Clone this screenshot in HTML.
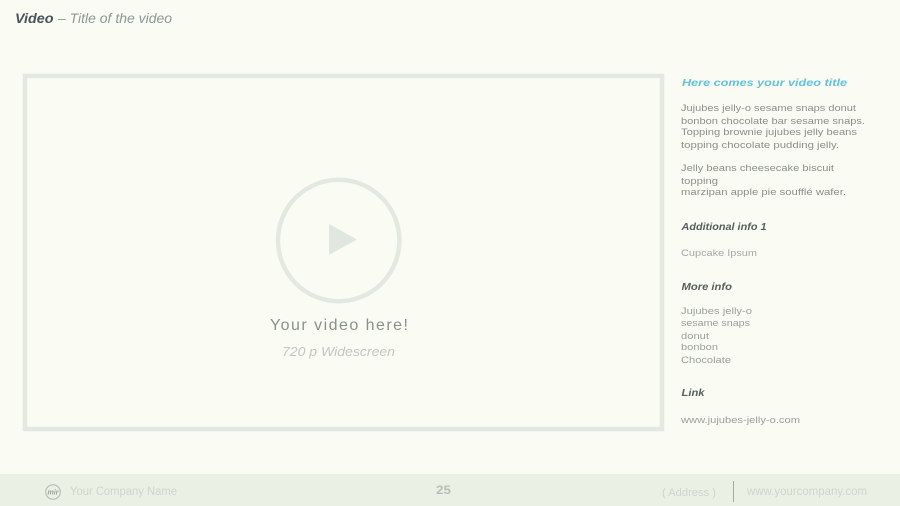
<!DOCTYPE html>
<html><head><meta charset="utf-8">
<style>
html,body{margin:0;padding:0;background:#fafbf3;width:900px;height:506px;overflow:hidden}
svg{display:block}
text{font-family:"Liberation Sans",sans-serif;white-space:pre}
.b{font-size:9.5px;fill:#8b908b}
.h{font-size:10.5px;font-weight:bold;font-style:italic;fill:#566060}
</style></head><body>
<svg width="900" height="506" viewBox="0 0 900 506" xmlns="http://www.w3.org/2000/svg">
<rect width="900" height="506" fill="#fafbf3"/>
<text x="15" y="23" font-size="14" font-weight="bold" font-style="italic" fill="#49545a" textLength="38.5" lengthAdjust="spacingAndGlyphs">Video</text>
<text x="58" y="23" font-size="14" font-style="italic" fill="#90979a" textLength="114" lengthAdjust="spacingAndGlyphs">– Title of the video</text>
<rect x="25" y="76" width="637" height="353" fill="#fafcf3" stroke="#e3e9e0" stroke-width="4.5"/>
<circle cx="338.7" cy="240.5" r="60.7" fill="none" stroke="#e3e9e0" stroke-width="4.5"/>
<path d="M329 224L357 239.5L329 255Z" fill="#e0e7df"/>
<text x="270" y="330" font-size="16" fill="#8a908d" textLength="138" lengthAdjust="spacing">Your video here!</text>
<text x="282" y="356" font-size="12.5" font-style="italic" fill="#c2c7c1" textLength="113" lengthAdjust="spacingAndGlyphs">720 p Widescreen</text>
<text x="682" y="86" font-size="10.5" font-weight="bold" font-style="italic" fill="#62c3de" textLength="165" lengthAdjust="spacingAndGlyphs">Here comes your video title</text>
<text class="b" x="681" y="111" textLength="175" lengthAdjust="spacingAndGlyphs">Jujubes jelly-o sesame snaps donut</text>
<text class="b" x="681" y="124" textLength="184" lengthAdjust="spacingAndGlyphs">bonbon chocolate bar sesame snaps.</text>
<text class="b" x="681" y="135" textLength="176" lengthAdjust="spacingAndGlyphs">Topping brownie jujubes jelly beans</text>
<text class="b" x="681" y="148" textLength="158" lengthAdjust="spacingAndGlyphs">topping chocolate pudding jelly.</text>
<text class="b" x="681" y="171" textLength="153" lengthAdjust="spacingAndGlyphs">Jelly beans cheesecake biscuit</text>
<text class="b" x="681" y="184" textLength="37" lengthAdjust="spacingAndGlyphs">topping</text>
<text class="b" x="681" y="195" textLength="165" lengthAdjust="spacingAndGlyphs">marzipan apple pie soufflé wafer.</text>
<text class="h" x="681.5" y="230" textLength="85" lengthAdjust="spacingAndGlyphs">Additional info 1</text>
<text class="b" x="681" y="256" style="fill:#a5aaa5" textLength="76" lengthAdjust="spacingAndGlyphs">Cupcake Ipsum</text>
<text class="h" x="681.5" y="290" textLength="50.5" lengthAdjust="spacingAndGlyphs">More info</text>
<text class="b" x="681" y="314" style="fill:#9ba09b" textLength="71" lengthAdjust="spacingAndGlyphs">Jujubes jelly-o</text>
<text class="b" x="681" y="326" style="fill:#9ba09b" textLength="69" lengthAdjust="spacingAndGlyphs">sesame snaps</text>
<text class="b" x="681" y="339" style="fill:#9ba09b" textLength="28" lengthAdjust="spacingAndGlyphs">donut</text>
<text class="b" x="681" y="350" style="fill:#9ba09b" textLength="37" lengthAdjust="spacingAndGlyphs">bonbon</text>
<text class="b" x="681" y="363" style="fill:#9ba09b" textLength="50" lengthAdjust="spacingAndGlyphs">Chocolate</text>
<text class="h" x="681.5" y="396" textLength="23" lengthAdjust="spacingAndGlyphs">Link</text>
<text class="b" x="681" y="423" style="fill:#9ba09b" textLength="119" lengthAdjust="spacingAndGlyphs">www.jujubes-jelly-o.com</text>
<rect x="0" y="474" width="900" height="32" fill="#ebf0e5"/>
<circle cx="53" cy="492" r="7.3" fill="none" stroke="#b0b5b0" stroke-width="1"/>
<text x="53" y="494.5" font-size="7" font-weight="bold" font-style="italic" fill="#9ba09b" text-anchor="middle">mir</text>
<text x="70" y="495" font-size="11.5" fill="#d0d5cb" textLength="107" lengthAdjust="spacingAndGlyphs">Your Company Name</text>
<text x="436" y="494" font-size="12" font-weight="bold" fill="#b9beb6" textLength="15" lengthAdjust="spacingAndGlyphs">25</text>
<text x="662" y="496" font-size="11" fill="#d0d5cb" textLength="54" lengthAdjust="spacingAndGlyphs">( Address )</text>
<rect x="733" y="481" width="1" height="21" fill="#a4a9a2"/>
<text x="747" y="495" font-size="11.5" fill="#d0d5cb" textLength="120" lengthAdjust="spacingAndGlyphs">www.yourcompany.com</text>
</svg>
</body></html>
